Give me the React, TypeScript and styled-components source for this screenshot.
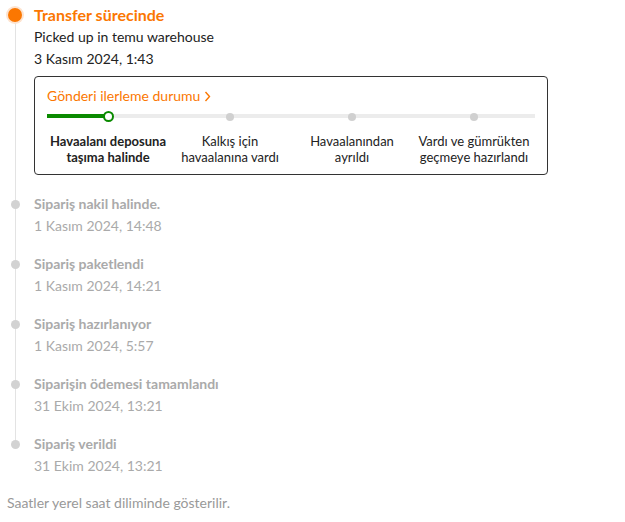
import React from "react";
import styled, { createGlobalStyle } from "styled-components";

const Global = createGlobalStyle`
  html, body { margin: 0; padding: 0; background: #fff; }
  body { font-family: "Lato", "Open Sans", sans-serif; color: #222; }
`;

const Page = styled.div`
  padding: 4px 0 0 7px;
  width: 618px;
  box-sizing: border-box;
`;

const Timeline = styled.div`
  position: relative;
  display: flex;
  flex-direction: column;
  &::before {
    content: "";
    position: absolute;
    left: 8px;
    top: 11px;
    bottom: 33px;
    width: 1px;
    background: #e3e3e3;
  }
`;

const Item = styled.div<{ $gap: number }>`
  display: grid;
  grid-template-columns: 16px 1fr;
  column-gap: 11px;
  padding-bottom: ${(p) => p.$gap}px;
  position: relative;
`;

const Rail = styled.div`
  display: flex;
  justify-content: center;
  padding-top: 7px;
`;

const Dot = styled.span<{ $active?: boolean }>`
  display: block;
  box-sizing: border-box;
  width: ${(p) => (p.$active ? 14 : 9)}px;
  height: ${(p) => (p.$active ? 14 : 9)}px;
  margin-top: ${(p) => (p.$active ? -3 : 0)}px;
  border-radius: 50%;
  background: ${(p) => (p.$active ? "#fb7701" : "#d2d2d2")};
  ${(p) => (p.$active ? "box-shadow: 0 0 0 2px #fde3cf;" : "")}
  position: relative;
  z-index: 1;
`;

const Body = styled.div`
  display: flex;
  flex-direction: column;
`;

const Title = styled.div<{ $active?: boolean }>`
  font-size: ${(p) => (p.$active ? 16 : 14)}px;
  line-height: 22px;
  font-weight: 700;
  color: ${(p) => (p.$active ? "#fb7701" : "#aaaaaa")};
`;

const Line = styled.div<{ $muted?: boolean }>`
  font-size: 14px;
  line-height: 22px;
  color: ${(p) => (p.$muted ? "#aaaaaa" : "#222")};
`;

const Card = styled.div`
  margin-top: 6px;
  width: 514px;
  box-sizing: border-box;
  border: 1px solid #333;
  border-radius: 4px;
  padding: 9px 12px 9px;
`;

const CardTitle = styled.div`
  display: flex;
  align-items: center;
  gap: 4px;
  font-size: 14px;
  line-height: 20px;
  color: #fb7701;
`;

const Track = styled.div`
  margin-top: 5px;
  height: 10px;
  position: relative;
  display: grid;
  grid-template-columns: repeat(4, 1fr);
  &::before {
    content: "";
    position: absolute;
    left: 0;
    right: 0;
    top: 3px;
    height: 4px;
    background: #ececec;
  }
`;

const Fill = styled.div`
  position: absolute;
  left: 0;
  top: 3px;
  height: 4px;
  background: #0a8a00;
`;

const Stop = styled.div`
  display: flex;
  justify-content: center;
  align-items: center;
  position: relative;
  z-index: 1;
`;

const StopDot = styled.span<{ $done?: boolean }>`
  display: block;
  box-sizing: border-box;
  border-radius: 50%;
  width: ${(p) => (p.$done ? 11 : 8)}px;
  height: ${(p) => (p.$done ? 11 : 8)}px;
  background: ${(p) => (p.$done ? "#fff" : "#d0d0d0")};
  border: ${(p) => (p.$done ? "2px solid #0a8a00" : "none")};
`;

const Labels = styled.div`
  margin-top: 12px;
  display: grid;
  grid-template-columns: repeat(4, 1fr);
`;

const Label = styled.div<{ $current?: boolean }>`
  display: flex;
  flex-direction: column;
  align-items: center;
  font-size: 13px;
  line-height: 16px;
  color: #222;
  white-space: nowrap;
  font-weight: ${(p) => (p.$current ? 700 : 400)};
`;

const Footer = styled.div`
  margin-top: 16px;
  font-size: 14px;
  line-height: 20px;
  color: #999;
`;

const stages = [
  ["Havaalanı deposuna", "taşıma halinde"],
  ["Kalkış için", "havaalanına vardı"],
  ["Havaalanından", "ayrıldı"],
  ["Vardı ve gümrükten", "geçmeye hazırlandı"],
];

const history = [
  ["Sipariş nakil halinde.", "1 Kasım 2024, 14:48"],
  ["Sipariş paketlendi", "1 Kasım 2024, 14:21"],
  ["Sipariş hazırlanıyor", "1 Kasım 2024, 5:57"],
  ["Siparişin ödemesi tamamlandı", "31 Ekim 2024, 13:21"],
  ["Sipariş verildi", "31 Ekim 2024, 13:21"],
];

export default function App() {
  return (
    <Page>
      <Global />
      <Timeline>
        <Item $gap={18}>
          <Rail>
            <Dot $active />
          </Rail>
          <Body>
            <Title $active>Transfer sürecinde</Title>
            <Line>Picked up in temu warehouse</Line>
            <Line>3 Kasım 2024, 1:43</Line>
            <Card>
              <CardTitle>
                Gönderi ilerleme durumu
                <svg width="7" height="11" viewBox="0 0 7 11">
                  <path d="M1.5 1 L5.5 5.5 L1.5 10" fill="none" stroke="#fb7701" strokeWidth="1.4" />
                </svg>
              </CardTitle>
              <Track>
                <Fill style={{ width: `${100 / 8}%` }} />
                {stages.map((_, i) => (
                  <Stop key={i}>
                    <StopDot $done={i === 0} />
                  </Stop>
                ))}
              </Track>
              <Labels>
                {stages.map((s, i) => (
                  <Label key={i} $current={i === 0}>
                    <span>{s[0]}</span>
                    <span>{s[1]}</span>
                  </Label>
                ))}
              </Labels>
            </Card>
          </Body>
        </Item>
        {history.map(([t, d], i) => (
          <Item key={i} $gap={i === history.length - 1 ? 0 : 16}>
            <Rail>
              <Dot />
            </Rail>
            <Body>
              <Title>{t}</Title>
              <Line $muted>{d}</Line>
            </Body>
          </Item>
        ))}
      </Timeline>
      <Footer>Saatler yerel saat diliminde gösterilir.</Footer>
    </Page>
  );
}
